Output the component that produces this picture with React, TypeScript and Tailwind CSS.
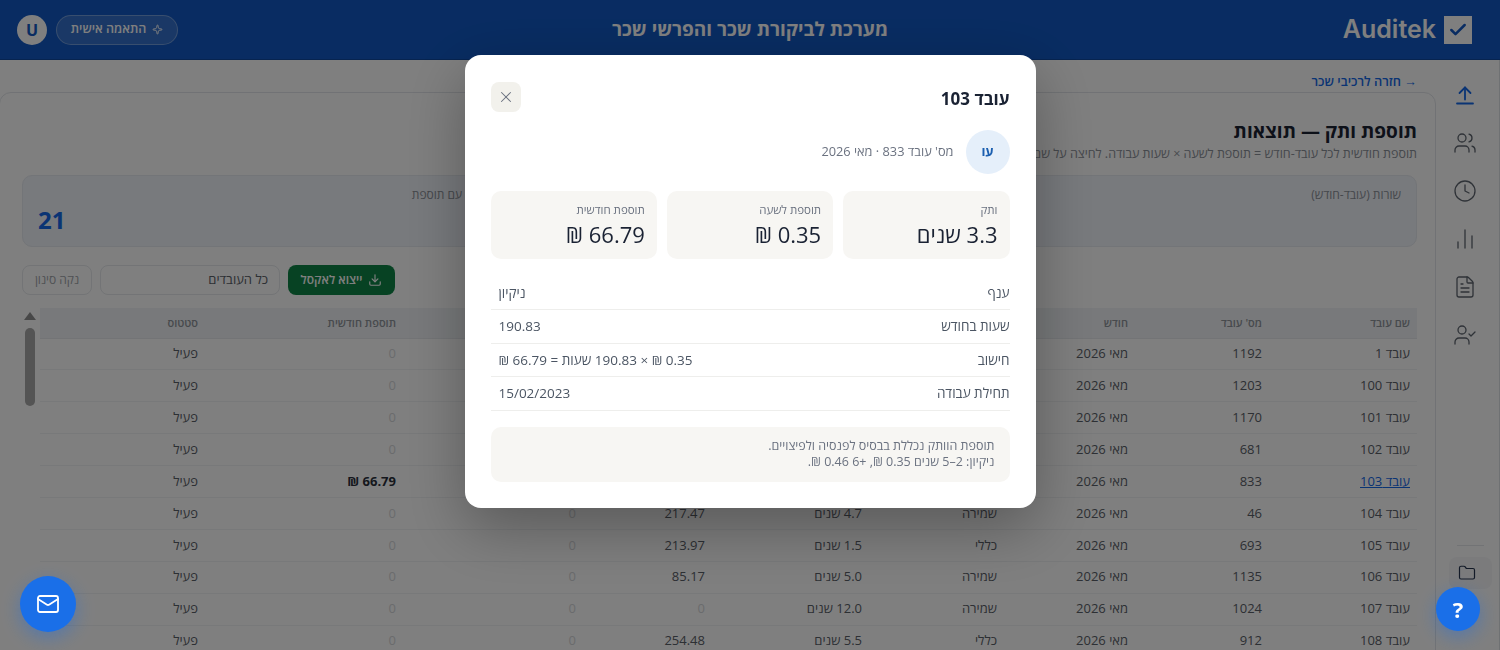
import { Check, Clock, Download, FileText, Folder, Mail, Sparkle, BarChart2, UserCheck, Users, X } from "lucide-react";

const rows = [
  ["עובד 1", "1192", "מאי 2026", "כללי", "2.1 שנים", "180.50", "0", "0"],
  ["עובד 100", "1203", "מאי 2026", "שמירה", "1.2 שנים", "201.25", "0", "0"],
  ["עובד 101", "1170", "מאי 2026", "כללי", "0.8 שנים", "176.00", "0", "0"],
  ["עובד 102", "681", "מאי 2026", "כללי", "1.9 שנים", "198.40", "0", "0"],
  ["עובד 103", "833", "מאי 2026", "ניקיון", "3.3 שנים", "190.83", "0.35 ₪", "66.79 ₪"],
  ["עובד 104", "46", "מאי 2026", "שמירה", "4.7 שנים", "217.47", "0", "0"],
  ["עובד 105", "693", "מאי 2026", "כללי", "1.5 שנים", "213.97", "0", "0"],
  ["עובד 106", "1135", "מאי 2026", "שמירה", "5.0 שנים", "85.17", "0", "0"],
  ["עובד 107", "1024", "מאי 2026", "שמירה", "12.0 שנים", "0", "0", "0"],
  ["עובד 108", "912", "מאי 2026", "כללי", "5.5 שנים", "254.48", "0", "0"],
];

const headers = ["שם עובד", "מס' עובד", "חודש", "ענף", "ותק", "שעות", "תוספת לשעה", "תוספת חודשית", "סטטוס"];

const details = [
  ["ענף", "ניקיון"],
  ["שעות בחודש", "190.83"],
  ["חישוב", "0.35 ₪ × 190.83 שעות = 66.79 ₪"],
  ["תחילת עבודה", "15/02/2023"],
];

function Sidebar() {
  return (
    <aside className="w-[59px] shrink-0 border-r border-[#dfe2e6] flex flex-col items-center pt-[23px] pr-[10px] gap-[24px] text-[#5f6670]">
      <svg width="24" height="24" viewBox="0 0 24 24" fill="none" stroke="currentColor" strokeWidth="1.8" strokeLinecap="round" strokeLinejoin="round" className="text-[#1569e8]">
        <path d="M4 20.5h16" />
        <path d="M12 16.5V4.5" />
        <path d="m6.5 10 5.5-5.5 5.5 5.5" />
      </svg>
      <Users size={24} strokeWidth={1.3} />
      <Clock size={24} strokeWidth={1.3} />
      <BarChart2 size={24} strokeWidth={1.3} />
      <FileText size={24} strokeWidth={1.3} />
      <UserCheck size={24} strokeWidth={1.3} />
      <div className="mt-[174px] w-[27px] h-px bg-[#e4e6ea] self-start mr-[5px]" />
      <div className="-mt-[13px] self-start -mr-[3px] w-[43px] h-[32px] rounded-lg bg-[#f6f7f9] flex items-center justify-center pr-[7px]">
        <Folder size={18} strokeWidth={1.6} className="text-[#27354f]" />
      </div>
    </aside>
  );
}

function Results() {
  return (
    <main className="flex-1 min-w-0 pt-[12px]">
      <div className="h-[20px] pr-[24px] flex items-center text-[12.8px] font-semibold text-[#1569e8]">
        → חזרה לרכיבי שכר
      </div>
      <section className="h-[560px] -ml-px mr-[5px] rounded-t-[12px] border border-[#e2e5ea] bg-white pt-[26px] pr-[18px] pl-[22px]">
        <h1 className="text-[19px] leading-[24px] font-bold text-[#1a2233]">תוספת ותק — תוצאות</h1>
        <p className="mt-[2px] text-[12.5px] leading-[18px] text-[#8b9098] whitespace-nowrap">
          תוספת חודשית לכל עובד-חודש = תוספת לשעה × שעות עבודה. לחיצה על שם עובד פותחת את פירוט החישוב.
        </p>
        <div className="mt-[12px] h-[72px] rounded-[10px] border border-[#e6eaf0] bg-[#f0f4fa] grid grid-cols-[1fr_1fr_490px]">
          {[
            ["שורות (עובד-חודש)", "21"],
            ["סך תוספת", "66.79 ₪"],
            ["עובדים עם תוספת", "21"],
          ].map(([label, value]) => (
            <div key={label} className="px-[15px] pt-[11px]">
              <div className="text-[12px] leading-[16px] text-[#8b9098]">{label}</div>
              <div dir="ltr" className="mt-[3px] text-[24px] leading-[28px] font-bold text-[#1569e8]">{value}</div>
            </div>
          ))}
        </div>
        <div className="mt-[18px] flex justify-end gap-[8px] h-[30px]" dir="ltr">
          <button className="w-[70px] rounded-lg border border-[#e6e8ec] text-[12px] text-[#a0a4aa]" dir="rtl">נקה סינון</button>
          <div className="w-[180px] rounded-lg border border-[#e6e8ec] text-[13px] text-[#5a6068] flex items-center px-[11px]" dir="rtl">כל העובדים</div>
          <button className="w-[107px] rounded-lg bg-[#0f8547] text-white text-[12px] font-semibold flex items-center justify-center gap-[6px]" dir="rtl">
            <Download size={14} />
            ייצוא לאקסל
          </button>
          <div className="flex-1" />
        </div>
        <div className="mt-[13px] flex">
          <table className="w-[1377px] table-fixed border-collapse text-[13px] text-[#5a6068]">
            <colgroup>
              <col className="w-[148px]" />
              <col className="w-[134px]" />
              <col className="w-[131px]" />
              <col className="w-[135px]" />
              <col className="w-[157px]" />
              <col className="w-[129px]" />
              <col className="w-[180px]" />
              <col className="w-[198px]" />
              <col className="w-[165px]" />
            </colgroup>
            <thead>
              <tr className="h-[30px] bg-[#f0f3f6] border-b border-[#e6e9ed]">
                {headers.map((h) => (
                  <th key={h} className="px-[7px] text-right text-[11px] font-semibold text-[#8f949b]">{h}</th>
                ))}
              </tr>
            </thead>
            <tbody>
              {rows.map((r) => (
                <tr key={r[0]} className="h-[31.9px] border-b border-[#f1f3f5]">
                  <td className={r[0] === "עובד 103" ? "px-[7px] text-[#1569e8] underline" : "px-[7px]"}>{r[0]}</td>
                  <td className="px-[7px]">{r[1]}</td>
                  <td className="px-[7px]">{r[2]}</td>
                  <td className="px-[7px]">{r[3]}</td>
                  <td className="px-[7px]">{r[4]}</td>
                  <td className={r[5] === "0" ? "px-[7px] text-[#d5d7da]" : "px-[7px]"}>{r[5]}</td>
                  <td className={r[6] === "0" ? "px-[7px] text-[#d5d7da]" : "px-[7px]"}>{r[6]}</td>
                  <td className={r[7] === "0" ? "px-[7px] text-[#d5d7da]" : "px-[7px] font-bold text-[#2a2f3a]"}>{r[7]}</td>
                  <td className="px-[7px]">פעיל</td>
                </tr>
              ))}
            </tbody>
          </table>
          <div className="w-[18px] shrink-0 flex flex-col items-center pt-[4px] pr-[2px]">
            <div className="w-0 h-0 border-x-[6px] border-x-transparent border-b-[8px] border-b-[#919191]" />
            <div className="mt-[8px] w-[10px] h-[78px] rounded-full bg-[#a8a8a8]" />
          </div>
        </div>
      </section>
    </main>
  );
}

function EmployeeModal() {
  return (
    <div className="fixed inset-0 bg-black/50 flex justify-center items-start pt-[55px] z-10">
      <div className="w-[571px] h-[453px] rounded-[16px] bg-white px-[26px] pt-[27px] shadow-[0_20px_60px_rgba(0,0,0,0.3)]">
        <div className="flex items-center justify-between h-[30px]">
          <h2 className="pt-[3px] text-[17px] font-bold text-[#1a2233]">עובד 103</h2>
          <button className="w-[30px] h-[30px] rounded-lg bg-[#f2f1ec] flex items-center justify-center text-[#6b7280]">
            <X size={18} strokeWidth={1.4} />
          </button>
        </div>
        <div className="mt-[18px] flex items-center gap-[12px]">
          <div className="w-[44px] h-[44px] rounded-full bg-[#e5effa] flex items-center justify-center text-[13px] font-bold text-[#1b5fb0]">עו</div>
          <span className="text-[12.8px] text-[#6b7280]">מס' עובד 833 · מאי 2026</span>
        </div>
        <div className="mt-[17px] grid grid-cols-3 gap-[10px]">
          {[
            ["ותק", "3.3 שנים"],
            ["תוספת לשעה", "0.35 ₪"],
            ["תוספת חודשית", "66.79 ₪"],
          ].map(([label, value]) => (
            <div key={label} className="h-[68px] rounded-[10px] bg-[#f7f6f3] px-[12px] pt-[11px]">
              <div className="text-[11.5px] leading-[16px] text-[#6b7280]">{label}</div>
              <div className="mt-[2px] text-[22px] leading-[28px] font-medium text-[#1a2233]">{value}</div>
            </div>
          ))}
        </div>
        <div className="mt-[18px]">
          {details.map(([k, v]) => (
            <div key={k} className="h-[33.4px] flex items-center justify-between border-b border-[#eeeeec] text-[13.5px] text-[#4b5563]">
              <span>{k}</span>
              <span className="pl-[8px]">{v}</span>
            </div>
          ))}
        </div>
        <div className="mt-[16px] h-[55px] rounded-[10px] bg-[#f7f6f3] px-[15px] pt-[11px] text-[12.5px] leading-[16px] text-[#6b7280]">
          <div>תוספת הוותק נכללת בבסיס לפנסיה ולפיצויים.</div>
          <div>ניקיון: 2–5 שנים 0.35 ₪, +6 0.46 ₪.</div>
        </div>
      </div>
    </div>
  );
}

export default function App() {
  return (
    <div dir="rtl" className="h-[650px] overflow-hidden bg-white [font-family:'Open_Sans','Noto_Sans','Liberation_Sans',sans-serif]">
      <header className="h-[60px] bg-[#1259c4] border-b border-[#0e48a0] grid grid-cols-3 items-center px-[17px] text-white">
        <div dir="ltr" className="flex items-center justify-end gap-[8px] pr-[11px] text-[25px] font-semibold [font-family:Inter,sans-serif]">
          Auditek
          <span className="w-[28px] h-[28px] bg-white flex items-center justify-center text-[#1259c4]">
            <Check size={20} strokeWidth={3} />
          </span>
        </div>
        <div className="text-center text-[19px] font-bold whitespace-nowrap">מערכת לביקורת שכר והפרשי שכר</div>
        <div className="flex items-center justify-end gap-[9px]">
          <div className="h-[30px] w-[122px] rounded-full border border-white/30 bg-white/15 flex items-center justify-center gap-[6px] text-[12.5px] font-semibold">
            <Sparkle size={11} />
            התאמה אישית
          </div>
          <div className="w-[30px] h-[30px] rounded-full bg-white text-[#1259c4] flex items-center justify-center text-[16px] font-bold">U</div>
        </div>
      </header>
      <div className="flex h-[590px]">
        <Sidebar />
        <Results />
      </div>
      <EmployeeModal />
      <button className="fixed z-20 left-[20px] top-[576px] w-[56px] h-[56px] rounded-full bg-[#1a6fe8] text-white flex items-center justify-center shadow-[0_6px_18px_rgba(26,111,232,0.4)]">
        <Mail size={24} strokeWidth={1.8} />
      </button>
      <button className="fixed z-20 left-[1436px] top-[587px] w-[44px] h-[44px] rounded-full bg-[#1a6fe8] text-white flex items-center justify-center text-[22px] font-bold shadow-[0_6px_18px_rgba(26,111,232,0.4)]">?</button>
    </div>
  );
}
